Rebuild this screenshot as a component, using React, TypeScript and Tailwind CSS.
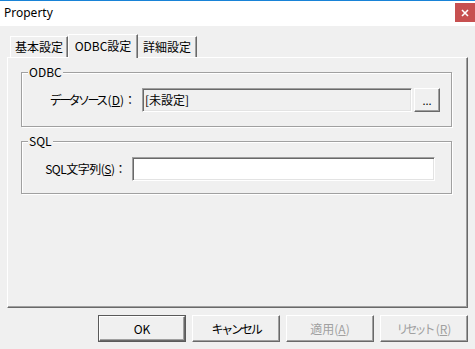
import React from "react";

const font = { fontFamily: '"Noto Sans CJK JP", "Noto Sans", sans-serif' };

function RaisedButton({
  children,
  disabled,
  isDefault,
  className = "",
}: {
  children: React.ReactNode;
  disabled?: boolean;
  isDefault?: boolean;
  className?: string;
}) {
  const inner = (
    <div
      className={`flex h-full w-full items-center justify-center border border-t-white border-l-white border-r-[#696969] border-b-[#696969] bg-[#f0f0f0] shadow-[inset_-1px_-1px_0_#a0a0a0] ${
        disabled ? "text-[#a0a0a0]" : "text-black"
      }`}
    >
      {children}
    </div>
  );
  if (isDefault) {
    return <div className={`border border-[#5a5a5a] ${className}`}>{inner}</div>;
  }
  return <div className={className}>{inner}</div>;
}

function GroupBox({
  title,
  className = "",
  children,
}: {
  title: string;
  className?: string;
  children: React.ReactNode;
}) {
  return (
    <div
      className={`relative border border-[#a0a0a0] shadow-[inset_1px_1px_0_#fff,1px_1px_0_#fff] ${className}`}
    >
      <span className="absolute left-[6px] top-[-9px] bg-[#f0f0f0] px-[1px] text-[12px] leading-[16px] text-black">
        {title}
      </span>
      {children}
    </div>
  );
}

export default function App() {
  return (
    <div
      className="flex h-[349px] w-[475px] flex-col bg-[#f0f0f0] text-[12px] text-black"
      style={font}
    >
      {/* Title bar */}
      <div className="flex h-[26px] items-start justify-between border-t border-[#1883d7] bg-white">
        <span
          className="pl-[4px] pt-[4px] text-[12px] leading-[16px] text-black"
          style={{ fontFamily: '"Noto Sans", "Open Sans", sans-serif' }}
        >
          Property
        </span>
        <div className="mt-[2px] flex h-[19px] w-[20px] items-center justify-center bg-[#c75050]">
          <svg width="8" height="8" viewBox="0 0 8 8">
            <path d="M1 1 L7 7 M7 1 L1 7" stroke="#fff" strokeWidth="1.6" />
          </svg>
        </div>
      </div>

      {/* Tabs + panel */}
      <div className="px-[7px] pt-[8px]">
        <div className="flex h-[23px] items-end pl-[3px]">
          <div className="flex h-[21px] w-[58px] items-center justify-center border-l border-t border-r border-l-white border-t-white border-r-[#696969] shadow-[inset_-1px_0_0_#a0a0a0]">
            基本設定
          </div>
          <div className="relative z-10 -mb-px flex h-[24px] w-[70px] items-start justify-center border-l border-t border-r border-l-white border-t-white border-r-[#696969] bg-[#f0f0f0] pt-[2px] shadow-[inset_-1px_0_0_#a0a0a0]">
            ODBC設定
          </div>
          <div className="flex h-[21px] w-[59px] items-center justify-center border-t border-r border-t-white border-r-[#696969] shadow-[inset_-1px_0_0_#a0a0a0]">
            詳細設定
          </div>
        </div>
        <div className="h-[251px] w-[461px] border border-t-white border-l-white border-r-[#696969] border-b-[#696969] pl-[13px] pt-[14px] shadow-[inset_-1px_-1px_0_#a0a0a0]">
          <GroupBox title="ODBC" className="h-[55px] w-[431px]">
            <div className="flex items-center pt-[15px]">
              <span className="w-[120px] shrink-0 pr-[6px] text-right leading-[24px]">
                <span className="tracking-[-2.6px]">データソース</span>
                <span className="pl-[2px]">
                  (<span className="underline">D</span>)：
                </span>
              </span>
              <div className="flex h-[24px] w-[270px] items-center border border-t-[#a0a0a0] border-l-[#a0a0a0] border-r-white border-b-white pl-[2px] shadow-[inset_1px_1px_0_#696969,inset_-1px_-1px_0_#e3e3e3]">
                [未設定]
              </div>
              <RaisedButton className="ml-[2px] h-[24px] w-[26px]">
                <span className="text-[11px] leading-none">...</span>
              </RaisedButton>
            </div>
          </GroupBox>
          <GroupBox title="SQL" className="mt-[14px] h-[53px] w-[431px]">
            <div className="flex items-center pt-[15px]">
              <span className="w-[110px] shrink-0 pr-[6px] text-right leading-[24px] tracking-[-0.5px]">
                SQL文字列(<span className="underline">S</span>)：
              </span>
              <div className="h-[24px] w-[303px] border border-t-[#a0a0a0] border-l-[#a0a0a0] border-r-white border-b-white bg-white shadow-[inset_1px_1px_0_#696969,inset_-1px_-1px_0_#e3e3e3]" />
            </div>
          </GroupBox>
        </div>
      </div>

      {/* Buttons */}
      <div className="mt-[7px] flex justify-end gap-[6px] pr-[7px]">
        <RaisedButton isDefault className="h-[27px] w-[88px]">
          OK
        </RaisedButton>
        <RaisedButton className="h-[27px] w-[88px]">
          <span className="tracking-[-2.2px]">キャンセル</span>
        </RaisedButton>
        <RaisedButton disabled className="h-[27px] w-[88px]">
          適用(<span className="underline">A</span>)
        </RaisedButton>
        <RaisedButton disabled className="h-[27px] w-[88px]">
          <span className="tracking-[-3px]">リセット</span>
          <span className="pl-[3px]">
            (<span className="underline">R</span>)
          </span>
        </RaisedButton>
      </div>
    </div>
  );
}
